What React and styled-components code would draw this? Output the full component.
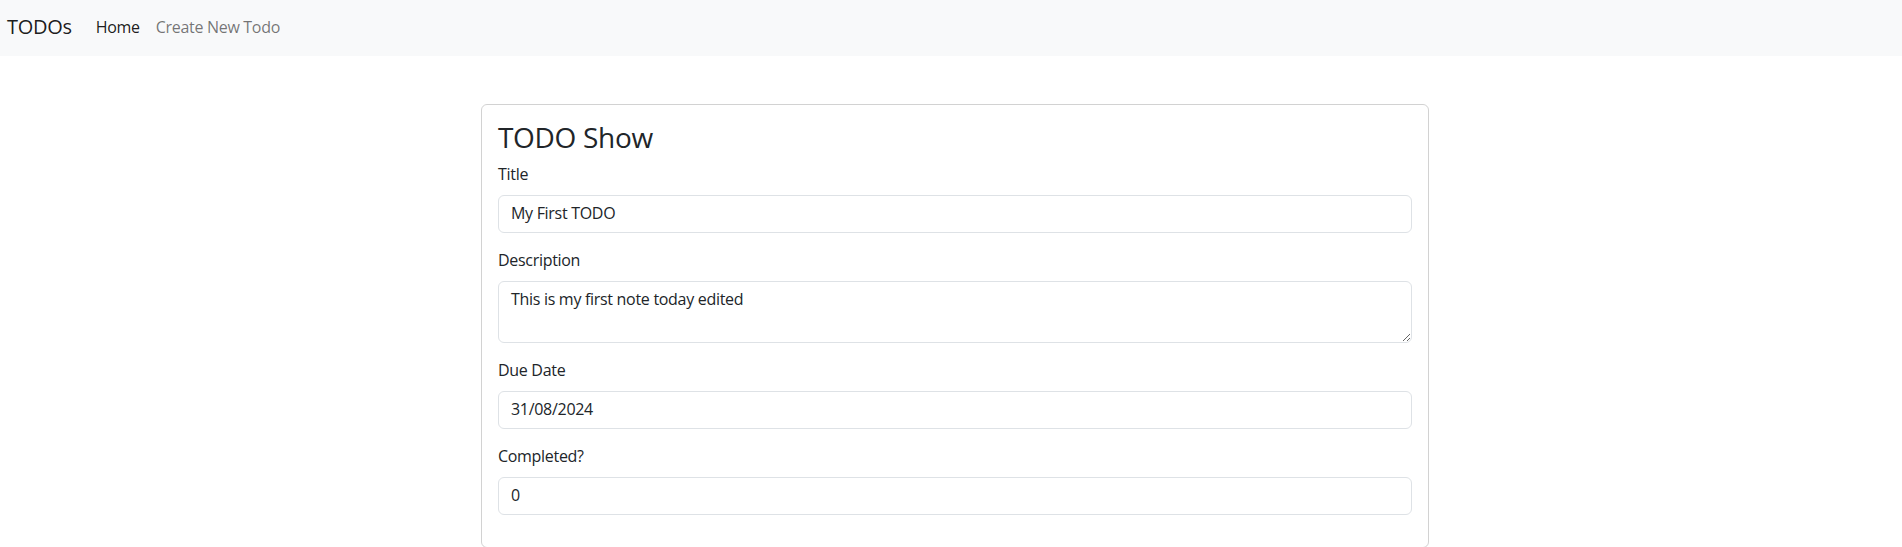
import React from 'react';
import styled, { createGlobalStyle } from 'styled-components';

const GlobalStyle = createGlobalStyle`
    *, *::before, *::after {
        box-sizing: border-box;
    }

    body {
        margin: 0;
        font-family: "Open Sans", "Noto Sans", sans-serif;
        font-size: 16px;
        line-height: 1.5;
        color: #212529;
        background-color: #fff;
    }
`;

const Navbar = styled.nav`
    display: flex;
    align-items: center;
    height: 56px;
    padding: 8px 7px;
    background-color: #f8f9fa;
`;

const Brand = styled.a`
    font-size: 20px;
    line-height: 30px;
    padding: 4px 0 6px;
    margin-right: 16px;
    color: rgba(0, 0, 0, 0.9);
    text-decoration: none;
    letter-spacing: -0.3px;
`;

const NavList = styled.div`
    display: flex;
`;

const NavLink = styled.a`
    padding: 7px 8px 9px;
    color: ${props => props.active ? "rgba(0, 0, 0, 0.9)" : "rgba(0, 0, 0, 0.55)"};
    text-decoration: none;
    letter-spacing: -0.3px;
`;

const Main = styled.main`
    width: 948px;
    margin: 48px 0 0 calc(50% - 470px);
`;

const Card = styled.div`
    border: 1px solid rgba(0, 0, 0, 0.175);
    border-radius: 6px;
    padding: 16px;
`;

const CardTitle = styled.h3`
    margin: 0 0 8px;
    font-size: 28px;
    font-weight: 400;
    line-height: 1.2;
    letter-spacing: -0.3px;
`;

const Field = styled.div`
    margin-bottom: 16px;
`;

const Label = styled.label`
    display: block;
    line-height: 22px;
    margin-bottom: 10px;
    letter-spacing: -0.3px;
`;

const Input = styled.input`
    display: block;
    width: 100%;
    height: 38px;
    padding: 5px 12px 7px;
    font: inherit;
    letter-spacing: -0.3px;
    color: #212529;
    background-color: #fff;
    border: 1px solid #dee2e6;
    border-radius: 6px;
    outline: none;
`;

const TextArea = styled.textarea`
    display: block;
    width: 100%;
    height: 62px;
    padding: 5px 12px 7px;
    font: inherit;
    letter-spacing: -0.3px;
    color: #212529;
    background-color: #fff;
    border: 1px solid #dee2e6;
    border-radius: 6px;
    outline: none;
    resize: vertical;
`;

const App = () => {
    const todo = {
        title: "My First TODO",
        description: "This is my first note today edited",
        dueDate: "31/08/2024",
        completed: "0"
    };

    return (
        <>
            <GlobalStyle />
            <Navbar>
                <Brand href="#">TODOs</Brand>
                <NavList>
                    <NavLink href="#" active>Home</NavLink>
                    <NavLink href="#">Create New Todo</NavLink>
                </NavList>
            </Navbar>

            <Main>
                <Card>
                    <CardTitle>TODO Show</CardTitle>

                    <Field>
                        <Label>Title</Label>
                        <Input type="text" value={todo.title} readOnly />
                    </Field>

                    <Field>
                        <Label>Description</Label>
                        <TextArea rows={2} value={todo.description} readOnly />
                    </Field>

                    <Field>
                        <Label>Due Date</Label>
                        <Input type="text" value={todo.dueDate} readOnly />
                    </Field>

                    <Field>
                        <Label>Completed?</Label>
                        <Input type="text" value={todo.completed} readOnly />
                    </Field>
                </Card>
            </Main>
        </>
    );
}

export default App;
